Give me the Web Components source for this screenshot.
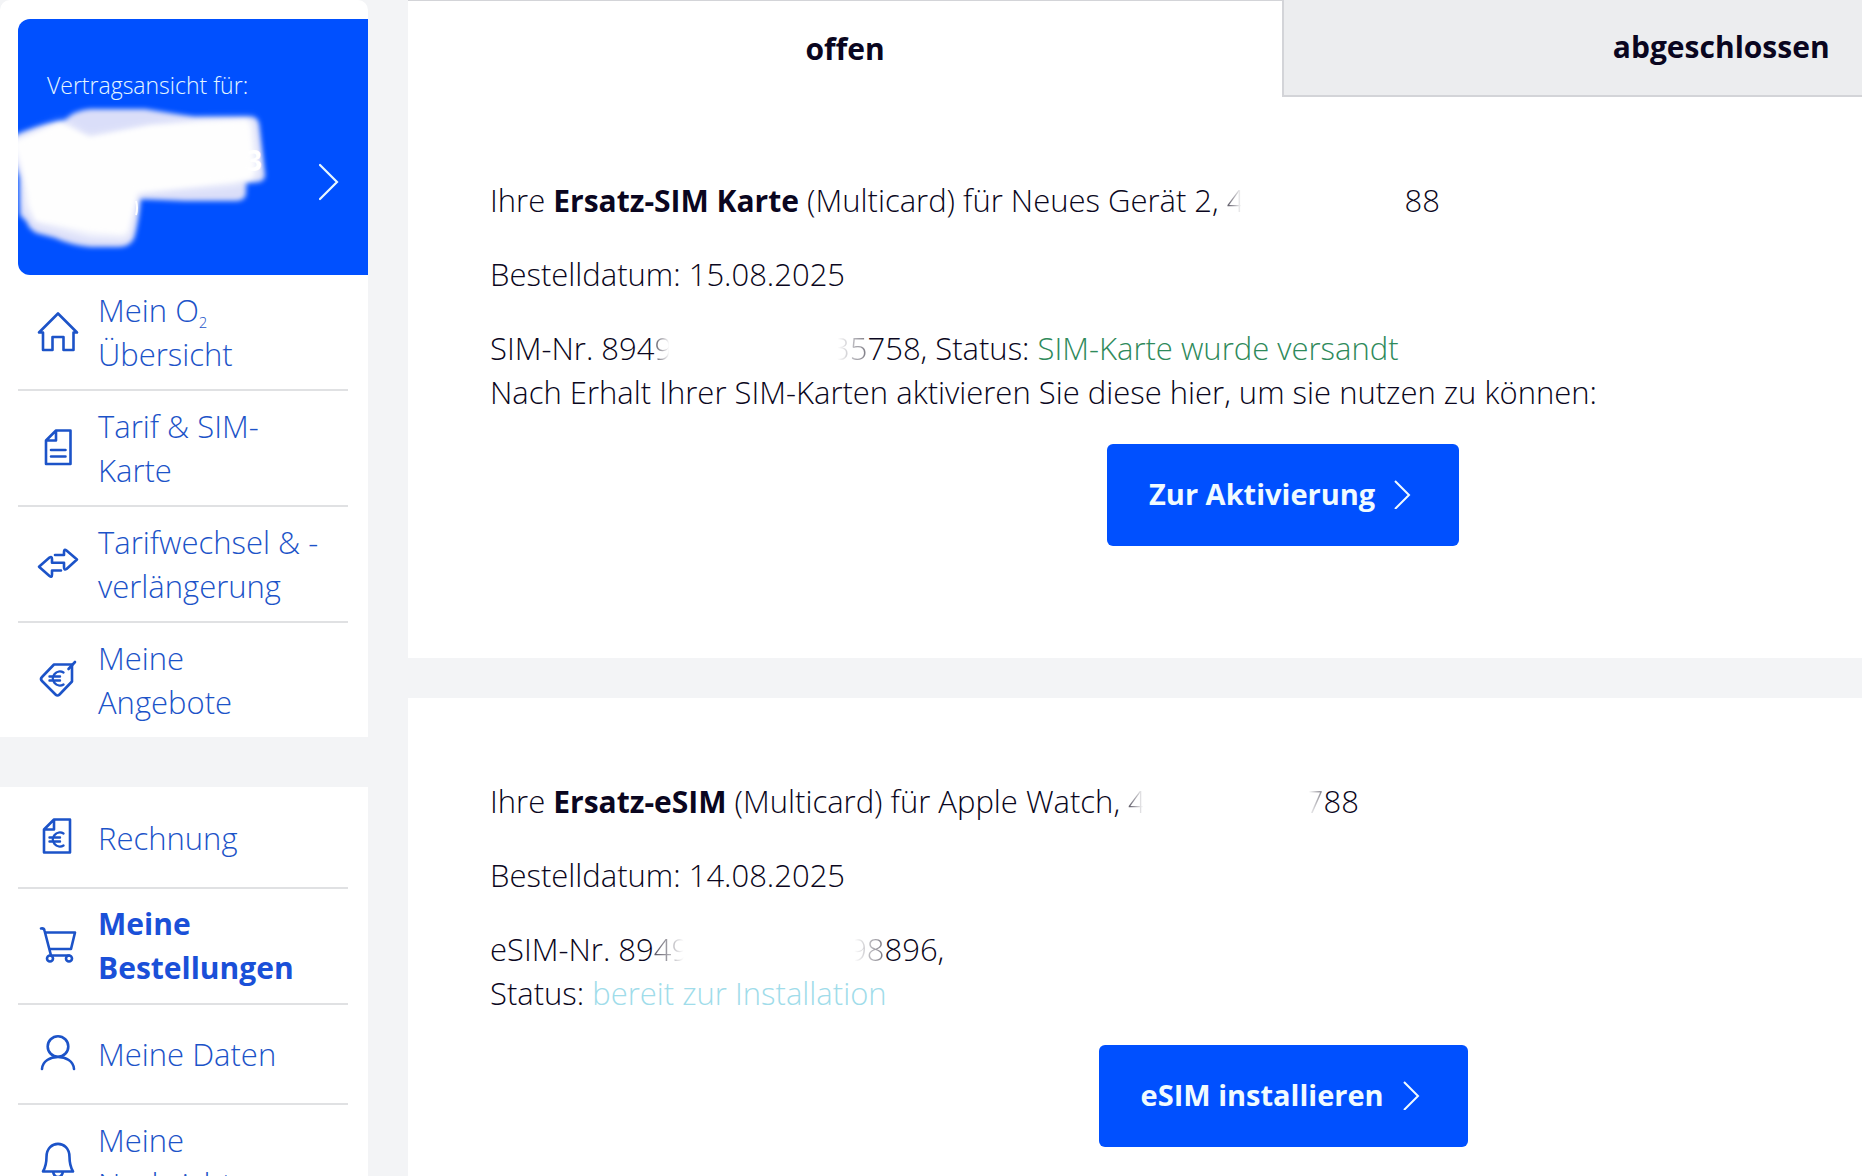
<!DOCTYPE html>
<html lang="de">
<head>
<meta charset="utf-8">
<title>Meine Bestellungen</title>
<style>
  html, body { margin: 0; height: 100%; }
  body {
    overflow: hidden;
    background: #f3f4f6;
    color: #0a0620;
    font: 300 31px/44px "Open Sans", "Noto Sans", sans-serif;
    --blue: #0050ff;
    --link: #1c53c8;
    --rule: #e0e1e3;
  }
  b { font-size: 30px; font-weight: 700; line-height: 0; }
</style>
</head>
<body>
<account-page>
  <side-panel slot="nav" class="first">
    <contract-card>Vertragsansicht für:</contract-card>
    <nav-item icon="home">Mein O<small>2</small> Übersicht</nav-item>
    <nav-item icon="doc">Tarif &amp; SIM-Karte</nav-item>
    <nav-item icon="swap">Tarifwechsel &amp; -verlängerung</nav-item>
    <nav-item icon="tag">Meine Angebote</nav-item>
  </side-panel>
  <side-panel slot="nav">
    <nav-item icon="bill">Rechnung</nav-item>
    <nav-item icon="cart" current>Meine Bestellungen</nav-item>
    <nav-item icon="user">Meine Daten</nav-item>
    <nav-item icon="bell">Meine Nachrichten</nav-item>
  </side-panel>

  <order-tabs></order-tabs>
  <order-card action="Zur Aktivierung">
    <p>Ihre <b>Ersatz-SIM Karte</b> (Multicard) für Neues Gerät 2, <fade-text to="right">4</fade-text><hidden-digits></hidden-digits>88</p>
    <p>Bestelldatum: 15.08.2025</p>
    <p>SIM-Nr. 894<fade-text to="right">9</fade-text><hidden-digits></hidden-digits><fade-text to="left">35</fade-text>758, Status: <status-text kind="sent">SIM-Karte wurde versandt</status-text><br>Nach Erhalt Ihrer SIM-Karten aktivieren Sie diese hier, um sie nutzen zu können:</p>
  </order-card>
  <order-card action="eSIM installieren">
    <p>Ihre <b>Ersatz-eSIM</b> (Multicard) für Apple Watch, <fade-text to="right">4</fade-text><hidden-digits></hidden-digits><fade-text to="left">7</fade-text>88</p>
    <p>Bestelldatum: 14.08.2025</p>
    <p>eSIM-Nr. 89<fade-text to="right">49</fade-text><hidden-digits></hidden-digits><fade-text to="left">98</fade-text>896,<br>Status: <status-text kind="ready">bereit zur Installation</status-text></p>
  </order-card>
</account-page>

<script>
const define = (name, html, setup) => {
  const tpl = document.createElement('template');
  tpl.innerHTML = html;
  customElements.define(name, class extends HTMLElement {
    constructor() {
      super();
      this.attachShadow({ mode: 'open' }).append(tpl.content.cloneNode(true));
    }
    connectedCallback() { if (setup) setup(this, this.shadowRoot); }
  });
};

const euro = '<path d="M25.500 12.500a7 7 0 1 0 0 12M11.500 16.500H22M11.500 20.500H22" stroke-width="2.400"/>';
const icons = {
  home: '<path d="M1 20.5 20 1.5 39 20.5H35.5V38H25.5V25H14.5V38H5V20.5Z"/>',
  doc: '<path d="M18 2.5H32.5V36H8V12.5ZM18 2.5V12.5H8M13 22H27.5M13 28.5H27.5"/>',
  swap: '<path d="M17 11H26V8Q26 4.500 28.500 6.500L39 15.500 28.500 25Q26 26.500 26 23V18.700H14V15Q14 12 11.500 13.500L1 22.700 11.500 32Q14 34 14 30.500V26.500H23"/>',
  tag: `<path d="M16 4.500H34V21.500L21.500 34.500Q19.500 36.500 17.500 34.500L4 21Q2 19 4 17Z"/><path d="M37 2 30.500 9"/>${euro}`,
  bill: `<path d="M16 1.500H32V34.500H6V11.500ZM16 1.500V11.500H6"/><g transform="translate(0 3)">${euro}</g>`,
  cart: '<path d="M3 2.500Q6 2 6.500 4.500L13 29.500M8 6.500H37L33 23H11.500M13 29.500H31"/><circle cx="12" cy="32.500" r="3"/><circle cx="31" cy="32.500" r="3"/>',
  user: '<circle cx="20" cy="12.500" r="10.300"/><path d="M4 35C5 19 35 19 36 35"/>',
  bell: '<path d="M8.500 15C8.500 -2.500 31.500 -2.500 31.500 15C31.500 23 33 26 35 29.500H5C7 26 8.500 23 8.500 15ZM15 29.500Q16 35 20 35T25 29.500"/>'
};

define('account-page', `
<style>
  :host { display: flex; gap: 40px; height: 100vh; overflow: hidden; }
  nav { flex: 0 0 368px; display: flex; flex-direction: column; gap: 50px; }
  main { flex: 0 0 94%; display: flex; flex-direction: column; gap: 40px; }
</style>
<nav><slot name="nav"></slot></nav>
<main><slot></slot></main>`);

define('side-panel', `
<style>
  :host { display: block; background: #fff; padding: 2px 0 0; }
  :host(.first) { padding: 19px 0 0; border-radius: 10px 10px 0 0; }
</style>
<slot></slot>`);

define('contract-card', `
<style>
  :host { display: block; margin-left: 18px; }
  a {
    position: relative; display: block; height: 256px; box-sizing: border-box; padding: 44px 29px;
    border-radius: 12px 0 0 12px; background: var(--blue); overflow: hidden;
    color: #e4f6ff; font-size: 23px; text-decoration: none;
  }
  .smear { position: absolute; inset: 0; width: 350px; height: 256px; }
  strong { position: absolute; left: 228px; top: 119px; font-size: 28px; font-weight: 700; color: #fff; }
</style>
<a href="#vertrag">
  <slot></slot>
  <svg class="smear" viewBox="18 19 350 256" aria-hidden="true">
    <defs>
      <filter id="soft" x="-10%" y="-10%" width="120%" height="120%"><feGaussianBlur stdDeviation="2.500"/></filter>
      <filter id="softer" x="-20%" y="-20%" width="140%" height="140%"><feGaussianBlur stdDeviation="5"/></filter>
    </defs>
    <path filter="url(#soft)" fill="#dadef9" d="M64 121Q74 110 90 109H145L195 117H252Q258 118 259 124L265 176Q264 182 256 182H246V194Q245 201 236 201H185L140 199Q139 220 134 238Q130 247 118 247H90Q70 245 55 238L36 233Q28 228 27 222L20 215V178L10 150V138Q35 125 64 121Z"/>
    <path filter="url(#softer)" fill="#fefefe" d="M12 142 62 122 88 138 145 128 200 121 252 120 258 176 235 184 138 192 128 238 90 236 36 222 26 206 24 172Z"/>
    <path filter="url(#soft)" fill="#fefefe" d="M16 142 60 124 90 138 150 126 248 121 252 178 136 192 126 232 36 220Z"/>
    <path d="M320 165 337 182 320 199" fill="none" stroke="#e8f8ff" stroke-width="2.200" stroke-linecap="round"/>
    <path d="M136 201Q138 208 136 215" fill="none" stroke="#fff" stroke-width="2"/>
  </svg>
  <strong>3</strong>
</a>`);

define('nav-item', `
<style>
  :host { display: block; margin: 0 20px 0 18px; border-bottom: 2px solid var(--rule); }
  :host(:last-child) { border-bottom: 0; }
  a {
    display: flex; align-items: center; gap: 20px; box-sizing: border-box; min-height: 98px;
    padding: 13px 25px 13px 20px; color: var(--link); text-decoration: none;
  }
  :host([current]) a { font-size: 30px; font-weight: 700; color: #1a50d8; }
  svg { flex: none; width: 40px; height: 40px; fill: none; stroke: var(--link); stroke-width: 2.600; stroke-linejoin: round; stroke-linecap: round; overflow: visible; }
  ::slotted(small) { font-size: 15px; line-height: 0; vertical-align: -6px; }
</style>
<a><svg viewBox="0 0 40 40" aria-hidden="true"></svg><span><slot></slot></span></a>`,
(el, root) => {
  const name = el.getAttribute('icon');
  root.querySelector('a').href = '#' + name;
  if (el.hasAttribute('current')) root.querySelector('a').setAttribute('aria-current', 'page');
  root.querySelector('svg').innerHTML = icons[name];
});

define('order-tabs', `
<style>
  :host { display: flex; margin-bottom: -40px; }
  button {
    flex: 1; padding: 25px 0 26px; border: 0 solid #d3d4d8; border-top-width: 1px; background: #fff;
    font: inherit; font-size: 30px; font-weight: 700; color: inherit;
  }
  button + button { background: #ecedef; border-width: 0 0 2px 2px; }
</style>
<button type="button" role="tab" aria-selected="true">offen</button>
<button type="button" role="tab" aria-selected="false">abgeschlossen</button>`);

define('order-card', `
<style>
  :host { display: block; background: #fff; padding: 81px 82px 112px; }
  ::slotted(p) { margin: 0 0 30px; white-space: nowrap; }
  .action { display: flex; justify-content: center; }
  button {
    display: flex; align-items: center; gap: 18px; padding: 28px 48px 30px 42px; border: 0; border-radius: 6px;
    background: var(--blue); color: #f0fbff; font: inherit; font-size: 29px; font-weight: 700;
  }
  svg { width: 18px; height: 30px; fill: none; stroke: currentColor; stroke-width: 2; }
</style>
<slot></slot>
<div class="action"><button type="button"><span></span><svg viewBox="0 0 18 30" aria-hidden="true"><path d="M2 2 16 16 2 30"/></svg></button></div>`,
(el, root) => { root.querySelector('span').textContent = el.getAttribute('action'); });

define('fade-text', `<style>
  :host { display: inline; }
  span { color: transparent; background: linear-gradient(to right, #55525f, #fff 85%) text; }
  :host([to="left"]) span { background-image: linear-gradient(to left, #77757f, #fff 85%); }
</style><span><slot></slot></span>`);

define('hidden-digits', `<style>
  :host { display: inline-block; width: 160px; }
</style>`);

define('status-text', `<style>
  :host { color: #2f8a5b; }
  :host([kind="ready"]) { color: #a0dcea; }
</style><slot></slot>`);
</script>
</body>
</html>
